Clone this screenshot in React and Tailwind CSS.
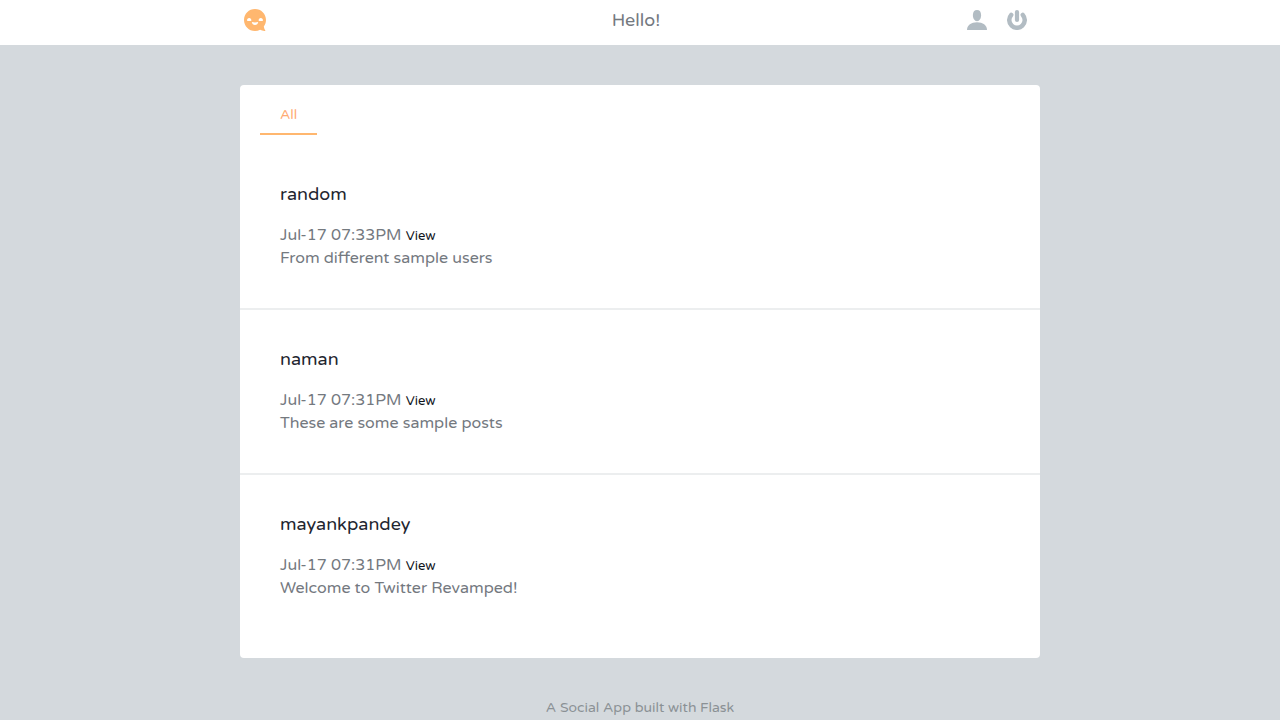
const posts = [
  { id: 1, author: "random", date: "Jul-17 07:33PM", text: "From different sample users" },
  { id: 2, author: "naman", date: "Jul-17 07:31PM", text: "These are some sample posts" },
  { id: 3, author: "mayankpandey", date: "Jul-17 07:31PM", text: "Welcome to Twitter Revamped!" },
];

function LogoIcon() {
  return (
    <svg viewBox="0 0 22 22" className="size-[22px]" aria-hidden="true">
      <path
        fill="#ffb76f"
        d="M11 0C17.1 0 22 4.9 22 11c0 2.500-.8 4.700-2.200 6.500.2 1.400.8 2.800 1.700 4.500-2.200.1-3.900-.4-5.400-1.200C14.600 21.600 12.800 22 11 22 4.900 22 0 17.100 0 11S4.900 0 11 0Z"
      />
      <path
        fill="#fff"
        d="M3 11.800C3 9.900 3.900 9 5.200 9s2.200.9 2.200 2.800c-1.300.3-3.100.3-4.400 0ZM14.600 11.800c0-1.900.9-2.800 2.200-2.800s2.200.9 2.200 2.800c-1.300.3-3.100.3-4.400 0ZM7.800 13.100c1.900.5 4.500.5 6.400 0-.2 1.900-1.500 2.900-3.200 2.900s-3-1-3.200-2.900Z"
      />
    </svg>
  );
}

function UserIcon() {
  return (
    <svg viewBox="0 0 20 20" className="size-5" fill="#b2bcc3" aria-hidden="true">
      <path d="M10 0c2.700 0 4.100 1.900 4.100 5.100 0 3.500-1.500 6.100-4.100 6.100S5.900 8.600 5.900 5.100C5.900 1.900 7.300 0 10 0Z" />
      <path d="M0 20C0 15.300 4.200 12.300 10 12.300S20 15.300 20 20H0Z" />
    </svg>
  );
}

function PowerIcon() {
  return (
    <svg viewBox="0 0 20 20" className="size-5" fill="none" stroke="#b2bcc3" strokeLinecap="round" aria-hidden="true">
      <path strokeWidth="4.200" d="M10 2.100v7.900" />
      <path strokeWidth="4.500" d="M4.200 4.900A7.750 7.750 0 1 0 15.800 4.900" />
    </svg>
  );
}

function Post({ post }) {
  return (
    <article className="border-b-2 border-[#eceeef] px-10 pt-10 pb-[38px] last:border-b-0">
      <h2 className="mb-5 text-lg leading-[19px] text-[#1f2630]">{post.author}</h2>
      <p className="leading-[23px]">
        {post.date}{" "}
        <a href="#" className="text-[13px] leading-none text-[#10151c]">View</a>
      </p>
      <p className="leading-[23px]">{post.text}</p>
    </article>
  );
}

export default function App() {
  return (
    <div className="min-h-screen bg-[#d4d9dd] font-['Varela_Round','Noto_Sans',sans-serif] text-base text-[#74797f]">
      <header className="bg-white pb-[5px]">
        <div className="mx-auto grid h-10 max-w-[800px] grid-cols-3 items-center pr-2">
          <a href="#" aria-label="Home" className="ml-1 justify-self-start">
            <LogoIcon />
          </a>
          <h1 className="text-center text-lg">Hello!</h1>
          <nav className="mr-[5px] flex gap-5 justify-self-end">
            <a href="#" aria-label="Profile"><UserIcon /></a>
            <a href="#" aria-label="Log out"><PowerIcon /></a>
          </nav>
        </div>
      </header>
      <main className="mx-auto mt-10 max-w-[800px] rounded bg-white pt-2 pb-5">
        <nav className="mb-2.5 flex px-5">
          <a href="#" className="border-b-2 border-[#ffb76f] px-5 pt-3 pb-2 text-sm text-[#ffab73]">All</a>
        </nav>
        {posts.map((post) => (
          <Post key={post.id} post={post} />
        ))}
      </main>
      <footer className="pt-10 text-center text-sm text-[#8b9195]">A Social App built with Flask</footer>
    </div>
  );
}
